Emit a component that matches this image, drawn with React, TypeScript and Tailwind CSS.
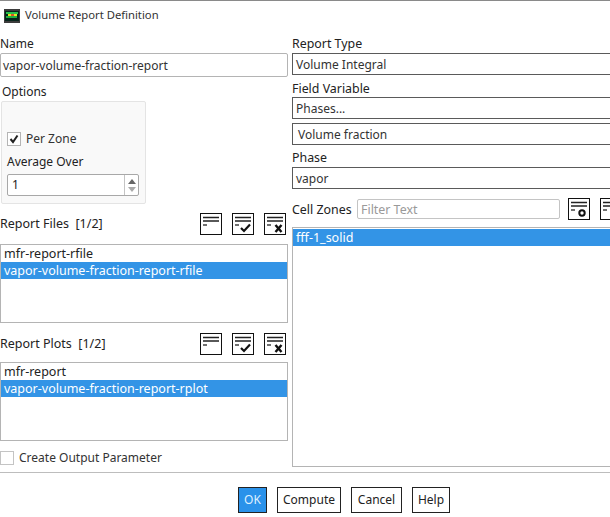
import React from 'react';

type IconKind = 'plain' | 'check' | 'cross' | 'gear';

const ListIcon = ({ kind }: { kind: IconKind }) => (
  <svg width="22" height="22" viewBox="0 0 22 22" className="shrink-0">
    <rect x="0.5" y="0.5" width="21" height="21" fill="#fff" stroke="#111" />
    <path d="M3 4.5h16M3 8h16" stroke="#222" strokeWidth="1.3" />
    <path d="M3 12h4" stroke="#222" strokeWidth="1.3" />
    {kind === 'check' && (
      <path d="M9 15l3 3 6-6.5" fill="none" stroke="#111" strokeWidth="2.2" />
    )}
    {kind === 'cross' && (
      <path d="M11.5 12l6 7M17.5 12l-6 7" fill="none" stroke="#111" strokeWidth="2.4" />
    )}
    {kind === 'gear' && <circle cx="14" cy="15" r="2.7" fill="#fff" stroke="#111" strokeWidth="2" />}
  </svg>
);

const AppLogo = () => (
  <svg width="16" height="14" viewBox="0 0 16 14" className="shrink-0">
    <rect width="16" height="14" fill="#3c3c3c" />
    <rect x="1" y="2" width="14" height="10" fill="#07251b" />
    <rect x="2" y="3" width="12" height="2" fill="#27c24c" />
    <rect x="4" y="5" width="9" height="2" fill="#e3e81f" />
    <rect x="2" y="7" width="11" height="2" fill="#1fae3f" />
    <rect x="7" y="5" width="3" height="2" fill="#e2502a" />
  </svg>
);

const Label = ({ children, className = '' }: { children: React.ReactNode; className?: string }) => (
  <div className={`h-4 leading-4 text-[#222] ${className}`}>{children}</div>
);

const Field = ({ value, className = '' }: { value: string; className?: string }) => (
  <div className={`flex h-[22px] w-[340px] items-center border border-[#5a5a5a] bg-white pl-[3px] pt-[2px] text-[#333] ${className}`}>
    {value}
  </div>
);

const ReportList = ({ first, second }: { first: string; second: string }) => (
  <div className="h-[79px] w-[288px] border border-[#b4b4b4] bg-white text-[12.5px]">
    <div className="flex h-[17px] items-center pl-[3px] pt-[2px] text-[#222]">{first}</div>
    <div className="flex h-[17px] items-center bg-[#3394e6] pl-[3px] pt-px text-white">{second}</div>
  </div>
);

const ListHeader = ({ title }: { title: string }) => (
  <div className="flex h-[23px] w-[287px] items-center pr-px">
    <span className="flex-1 whitespace-pre pt-[2px] text-[12.5px] text-[#222]">{title}</span>
    <div className="flex gap-[10px] self-end">
      <ListIcon kind="plain" />
      <ListIcon kind="check" />
      <ListIcon kind="cross" />
    </div>
  </div>
);

const FooterButton = ({ label, width, primary }: { label: string; width: string; primary?: boolean }) => (
  <button
    className={`flex h-[26px] items-center justify-center border border-[#222] ${width} ${
      primary ? 'bg-[#2a92ea] text-[#dff0ff]' : 'bg-white text-[#222]'
    }`}
  >
    {label}
  </button>
);

export default function App() {
  return (
    <div className="flex h-[517px] w-[610px] flex-col overflow-hidden border-t border-[#8a8a8a] bg-white text-[12px] font-['Noto_Sans','Open_Sans',sans-serif]">
      <div className="flex h-[34px] items-center gap-[5px] pb-[5px] pl-1 text-[11.25px] text-[#333]">
        <AppLogo />
        <span>Volume Report Definition</span>
      </div>

      <div className="flex h-[437px] gap-1">
        <div className="w-[288px] shrink-0">
          <Label className="mt-px">Name</Label>
          <div className="mt-px flex h-6 w-[288px] items-center rounded-[2px] border border-[#b4b4b4] pl-[2px] pt-[2px] text-[#333]">
            vapor-volume-fraction-report
          </div>
          <Label className="ml-[2px] mt-[7px]">Options</Label>
          <div className="ml-px mt-px h-[103px] w-[145px] rounded-[2px] border border-[#e4e4e4] bg-[#f9f9f9] pl-[5px] pt-[30px]">
            <div className="flex h-[14px] items-center gap-[5px]">
              <div className="flex h-[14px] w-[14px] items-center justify-center border border-[#b4b4b4] bg-white">
                <svg width="10" height="10" viewBox="0 0 10 10">
                  <path d="M1.5 5l2.5 3L8.5 1.5" fill="none" stroke="#222" strokeWidth="2" />
                </svg>
              </div>
              <span className="text-[#333]">Per Zone</span>
            </div>
            <Label className="mt-[8px]">Average Over</Label>
            <div className="mt-[4px] flex h-[22px] w-[132px] rounded-[2px] border border-[#a8a8a8] bg-white">
              <span className="flex-1 pl-1 leading-5 text-[#222]">1</span>
              <div className="flex w-[14px] flex-col items-center justify-center gap-[3px] border-l border-[#c4c4c4]">
                <div className="h-0 w-0 border-x-[4px] border-b-[5px] border-x-transparent border-b-[#666]" />
                <div className="h-0 w-0 border-x-[4px] border-t-[5px] border-x-transparent border-t-[#aaa]" />
              </div>
            </div>
          </div>
          <div className="mt-2">
            <ListHeader title="Report Files  [1/2]" />
          </div>
          <div className="mt-[9px]">
            <ReportList first="mfr-report-rfile" second="vapor-volume-fraction-report-rfile" />
          </div>
          <div className="mt-[9px]">
            <ListHeader title="Report Plots  [1/2]" />
          </div>
          <div className="mt-[7px]">
            <ReportList first="mfr-report" second="vapor-volume-fraction-report-rplot" />
          </div>
          <div className="mt-[10px] flex h-[14px] items-center gap-[5px]">
            <div className="h-[14px] w-[14px] border border-[#c4c4c4] bg-white" />
            <span className="text-[#333]">Create Output Parameter</span>
          </div>
        </div>

        <div className="w-[340px] shrink-0">
          <Label className="mt-px text-[12.4px]">Report Type</Label>
          <Field value="Volume Integral" className="mt-px" />
          <Label className="mt-[6px] text-[12.4px]">Field Variable</Label>
          <Field value="Phases..." className="mt-0" />
          <Field value="Volume fraction" className="mt-1 pl-[5px]" />
          <Label className="mt-[5px] text-[12.4px]">Phase</Label>
          <Field value="vapor" className="mt-px" />
          <div className="mt-[9px] flex h-[22px] items-center">
            <span className="w-[65px] pt-[2px] text-[12.4px] text-[#222]">Cell Zones</span>
            <div className="flex h-5 w-[203px] items-center rounded-[2px] border border-[#c4c4c4] pl-[3px] pt-[3px] text-[12.4px] text-[#9a9a9a]">
              Filter Text
            </div>
            <div className="ml-2 flex gap-[10px]">
              <ListIcon kind="gear" />
              <ListIcon kind="plain" />
            </div>
          </div>
          <div className="mt-[7px] h-[240px] border border-[#b4b4b4] bg-white pt-px text-[12.5px]">
            <div className="flex h-[17px] items-center bg-[#3394e6] pl-[3px] pt-[2px] text-white">fff-1_solid</div>
          </div>
        </div>
      </div>

      <div className="flex gap-[10px] border-t border-[#bdbdbd] pl-[238px] pt-[14px]">
        <FooterButton label="OK" width="w-[29px]" primary />
        <FooterButton label="Compute" width="w-[64px]" />
        <FooterButton label="Cancel" width="w-[51px]" />
        <FooterButton label="Help" width="w-[38px]" />
      </div>
    </div>
  );
}
